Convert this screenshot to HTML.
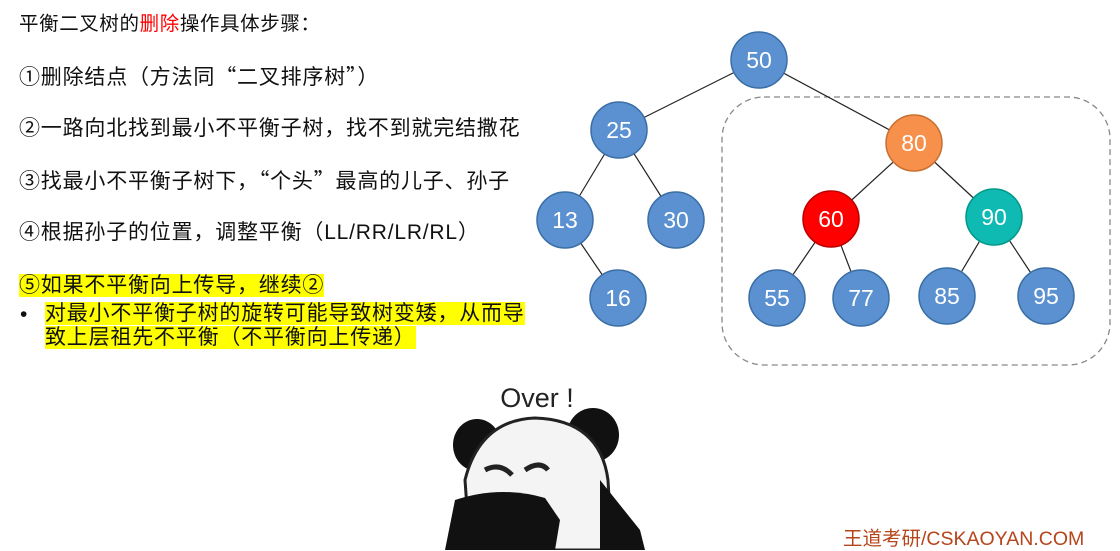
<!DOCTYPE html>
<html><head><meta charset="utf-8"><style>
body{margin:0;width:1120px;height:550px;background:#fff;position:relative;overflow:hidden;font-family:"Liberation Sans","Noto Sans CJK SC",sans-serif;color:#111}
.t{position:absolute;left:19px;font-size:21px;letter-spacing:0.8px;white-space:nowrap;line-height:25px}
.q{font-family:"Noto Sans CJK SC",sans-serif}
.hl{background:#ffff00}
.foot{position:absolute;left:843px;top:522px;font-size:19.5px;color:#b5451b;white-space:nowrap}
</style></head><body>
<div class="t" style="top:12px;font-size:19.5px;letter-spacing:0.6px">平衡二叉树的<span style="color:#ff0000">删除</span>操作具体步骤：</div>
<div class="t" style="top:64px">①删除结点（方法同<span class="q">“</span>二叉排序树<span class="q">”</span>）</div>
<div class="t" style="top:116px">②一路向北找到最小不平衡子树，找不到就完结撒花</div>
<div class="t" style="top:168px">③找最小不平衡子树下，<span class="q">“</span>个头<span class="q">”</span>最高的儿子、孙子</div>
<div class="t" style="top:220px">④根据孙子的位置，调整平衡（LL/RR/LR/RL）</div>
<div class="t" style="top:273px"><span class="hl">⑤如果不平衡向上传导，继续②</span></div>
<div class="t" style="top:302px;left:20px">•</div>
<div class="t" style="top:302px;left:45px;line-height:24px"><span class="hl">对最小不平衡子树的旋转可能导致树变矮，从而导</span><br><span class="hl">致上层祖先不平衡（不平衡向上传递）</span></div>

<svg width="1120" height="550" style="position:absolute;left:0;top:0">
<rect x="722" y="97" width="388" height="268" rx="42" fill="none" stroke="#888" stroke-width="1.3" stroke-dasharray="6,4"/>
<g stroke="#222" stroke-width="1.2">
<line x1="759" y1="60" x2="619" y2="130"/><line x1="759" y1="60" x2="914" y2="143"/>
<line x1="619" y1="130" x2="565" y2="220"/><line x1="619" y1="130" x2="676" y2="220"/>
<line x1="565" y1="220" x2="618" y2="298"/>
<line x1="914" y1="143" x2="831" y2="219"/><line x1="914" y1="143" x2="994" y2="217"/>
<line x1="831" y1="219" x2="777" y2="298"/><line x1="831" y1="219" x2="861" y2="298"/>
<line x1="994" y1="217" x2="947" y2="296"/><line x1="994" y1="217" x2="1046" y2="296"/>
</g>
<g stroke="#3a6ea5" stroke-width="1.5" font-family="Liberation Sans" font-size="23" text-anchor="middle">
<g fill="#5b91d1">
<circle cx="759" cy="60" r="28"/><circle cx="619" cy="130" r="28"/><circle cx="565" cy="220" r="28"/><circle cx="676" cy="220" r="28"/><circle cx="618" cy="298" r="28"/><circle cx="777" cy="298" r="28"/><circle cx="861" cy="298" r="28"/><circle cx="947" cy="296" r="28"/><circle cx="1046" cy="296" r="28"/>
</g>
<circle cx="914" cy="143" r="28" fill="#f7904a" stroke="#c77030"/>
<circle cx="831" cy="219" r="28" fill="#ff0000" stroke="#b00"/>
<circle cx="994" cy="217" r="28" fill="#0fbab3" stroke="#098"/>
<g fill="#fff" stroke="none">
<text x="759" y="68">50</text><text x="619" y="138">25</text><text x="914" y="151">80</text><text x="565" y="228">13</text><text x="676" y="228">30</text><text x="831" y="227">60</text><text x="994" y="225">90</text><text x="618" y="306">16</text><text x="777" y="306">55</text><text x="861" y="306">77</text><text x="947" y="304">85</text><text x="1046" y="304">95</text>
</g></g>
<text x="537" y="407" font-family="Liberation Sans" font-size="27" text-anchor="middle" fill="#222">Over !</text>
<g>
<ellipse cx="477" cy="445" rx="24" ry="26" fill="#111"/>
<ellipse cx="593" cy="435" rx="26" ry="27" fill="#111"/>
<path d="M470 550 L465 480 Q480 420 535 418 Q600 420 608 480 L612 550 Z" fill="#f4f4f4" stroke="#222" stroke-width="3"/>
<path d="M485 470 Q500 462 512 475" stroke="#222" stroke-width="5" fill="none"/>
<path d="M525 470 Q540 460 548 470" stroke="#222" stroke-width="5" fill="none"/>
<path d="M445 550 L455 500 Q500 485 545 498 L560 520 L555 550 Z" fill="#111"/>
<path d="M600 480 L640 530 L645 550 L600 550 Z" fill="#111"/>
</g>
</svg>
<div class="foot">王道考研/CSKAOYAN.COM</div>
</body></html>
